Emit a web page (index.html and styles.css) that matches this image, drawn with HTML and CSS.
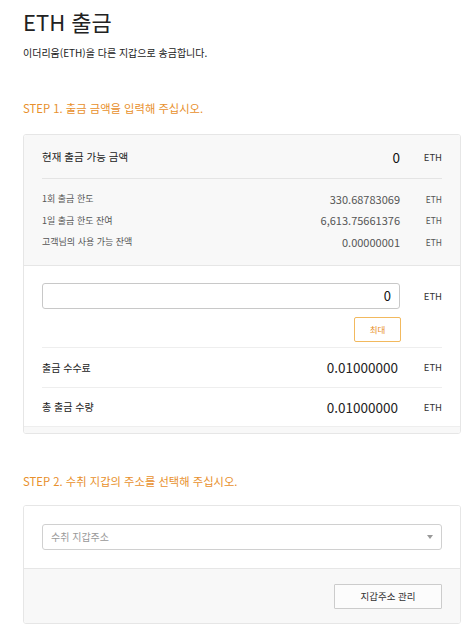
FILE: index.html
```html
<!DOCTYPE html>
<html lang="ko">
<head>
<meta charset="utf-8">
<title>ETH 출금</title>
<link rel="stylesheet" href="styles.css">
</head>
<body>
<h1 class="title">ETH 출금</h1>
<p class="desc">이더리움(ETH)을 다른 지갑으로 송금합니다.</p>

<h2 class="step step-1">STEP 1. 출금 금액을 입력해 주십시오.</h2>
<div class="card">
  <div class="summary">
    <div class="row row-main">
      <span class="label">현재 출금 가능 금액</span>
      <span class="val">0</span>
      <span class="unit">ETH</span>
    </div>
    <div class="divider"></div>
    <div class="row row-sub">
      <span class="label">1회 출금 한도</span>
      <span class="val">330.68783069</span>
      <span class="unit">ETH</span>
    </div>
    <div class="row row-sub">
      <span class="label">1일 출금 한도 잔여</span>
      <span class="val">6,613.75661376</span>
      <span class="unit">ETH</span>
    </div>
    <div class="row row-sub">
      <span class="label">고객님의 사용 가능 잔액</span>
      <span class="val">0.00000001</span>
      <span class="unit">ETH</span>
    </div>
  </div>
  <div class="body">
    <div class="row row-input">
      <div class="input">0</div>
      <span class="unit">ETH</span>
    </div>
    <div class="max-line">
      <button class="btn-max" type="button">최대</button>
    </div>
    <div class="row row-fee row-fee-first">
      <span class="label">출금 수수료</span>
      <span class="val">0.01000000</span>
      <span class="unit">ETH</span>
    </div>
    <div class="row row-fee row-fee-last">
      <span class="label">총 출금 수량</span>
      <span class="val">0.01000000</span>
      <span class="unit">ETH</span>
    </div>
  </div>
  <div class="strip"></div>
</div>

<h2 class="step step-2">STEP 2. 수취 지갑의 주소를 선택해 주십시오.</h2>
<div class="card card-2">
  <div class="select-wrap">
    <div class="select">
      <span class="placeholder">수취 지갑주소</span>
      <span class="arrow"></span>
    </div>
  </div>
  <div class="foot">
    <button class="btn-manage" type="button">지갑주소 관리</button>
  </div>
</div>
</body>
</html>
```

FILE: styles.css
```css
* { box-sizing: border-box; }

body {
  margin: 0;
  padding: 0 9px 0 23px;
  background: #fff;
  color: #222;
  font-family: "Noto Sans CJK KR", "Noto Sans", sans-serif;
}

.title {
  margin: 7px 0 0;
  font-size: 22px;
  line-height: 28px;
  font-weight: 400;
  color: #222;
}

.desc {
  margin: 10px 0 0;
  font-size: 10px;
  line-height: 16px;
  color: #222;
}

.step {
  margin: 0;
  font-size: 11.3px;
  line-height: 16px;
  font-weight: 400;
  color: #e8902c;
}

.step-1 { margin-top: 39px; }
.step-2 { margin-top: 39px; }

.card {
  margin-top: 18px;
  width: 438px;
  border: 1px solid #e6e6e6;
  border-radius: 3px;
  overflow: hidden;
}

.card-2 { margin-top: 16px; }

.summary {
  background: #f8f8f8;
  padding: 10px 18px 12px;
  border-bottom: 1px solid #e6e6e6;
}

.row {
  display: flex;
  align-items: center;
}

.label { flex: 1; }

.val { text-align: right; }

.unit {
  width: 42px;
  text-align: right;
  color: #333;
}

.row-main { height: 23px; }
.row-main .label { font-size: 10.5px; color: #222; }
.row-main .val { font-size: 13.5px; color: #111; }
.row-main .unit { font-size: 9.5px; }

.divider {
  height: 1px;
  background: #e4e4e4;
  margin: 10px 0 9px;
}

.row-sub { height: 21.5px; }
.row-sub .label { font-size: 9px; color: #555; }
.row-sub .val { font-size: 11px; color: #555; }
.row-sub .unit { font-size: 8.5px; color: #555; }

.body {
  background: #fff;
  padding: 17px 18px 0;
}

.input {
  flex: 1;
  height: 26px;
  border: 1px solid #c8c8c8;
  border-radius: 3px;
  padding: 0 8px;
  display: flex;
  align-items: center;
  justify-content: flex-end;
  font-size: 13px;
  color: #111;
}

.row-input .unit { font-size: 9.5px; }

.max-line {
  display: flex;
  justify-content: flex-end;
  padding-right: 41px;
  margin-top: 8px;
  padding-bottom: 5px;
  border-bottom: 1px solid #eee;
}

.btn-max {
  width: 47px;
  height: 25px;
  border: 1px solid #f2b95e;
  border-radius: 2px;
  background: #fff;
  color: #e8902c;
  font-family: inherit;
  font-size: 8.5px;
  padding: 0;
}

.row-fee-first { height: 40px; border-bottom: 1px solid #eee; }
.row-fee-last { height: 38px; }
.row-fee .label { font-size: 10px; color: #222; }
.row-fee .val { font-size: 13.5px; color: #222; padding-right: 2px; }
.row-fee .unit { font-size: 9.5px; }

.strip {
  height: 7px;
  background: #f8f8f8;
  border-top: 1px solid #eee;
}

.select-wrap {
  background: #fff;
  padding: 18px 18px;
  border-bottom: 1px solid #e6e6e6;
}

.select {
  height: 26px;
  border: 1px solid #d0d0d0;
  border-radius: 3px;
  display: flex;
  align-items: center;
  padding: 0 8px 0 8px;
}

.placeholder {
  flex: 1;
  font-size: 10px;
  color: #999;
}

.arrow {
  width: 0;
  height: 0;
  border-left: 3.5px solid transparent;
  border-right: 3.5px solid transparent;
  border-top: 4px solid #999;
}

.foot {
  background: #f8f8f8;
  padding: 15px 18px 14px;
  display: flex;
  justify-content: flex-end;
}

.btn-manage {
  width: 108px;
  height: 25px;
  border: 1px solid #ccc;
  border-radius: 1px;
  background: #fcfcfc;
  color: #333;
  font-family: inherit;
  font-size: 9.5px;
  padding: 0;
}
```
